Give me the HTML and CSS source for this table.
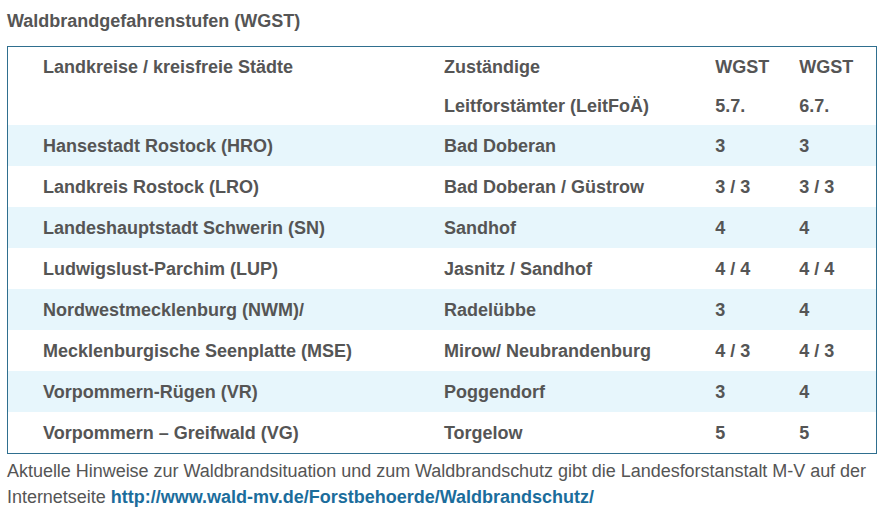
FILE: index.html
```html
<!DOCTYPE html>
<html lang="de">
<head>
<meta charset="utf-8">
<title>Waldbrandgefahrenstufen (WGST)</title>
<link rel="stylesheet" href="styles.css">
</head>
<body>
<div class="page">
  <h2 class="title">Waldbrandgefahrenstufen (WGST)</h2>
  <table class="wgst">
    <colgroup>
      <col class="c1"><col class="c2"><col class="c3"><col class="c4">
    </colgroup>
    <tbody>
      <tr class="head"><td>Landkreise / kreisfreie Städte</td><td>Zuständige</td><td>WGST</td><td>WGST</td></tr>
      <tr class="head"><td></td><td>Leitforstämter (LeitFoÄ)</td><td>5.7.</td><td>6.7.</td></tr>
      <tr class="alt"><td>Hansestadt Rostock (HRO)</td><td>Bad Doberan</td><td>3</td><td>3</td></tr>
      <tr><td>Landkreis Rostock (LRO)</td><td>Bad Doberan / Güstrow</td><td>3 / 3</td><td>3 / 3</td></tr>
      <tr class="alt"><td>Landeshauptstadt Schwerin (SN)</td><td>Sandhof</td><td>4</td><td>4</td></tr>
      <tr><td>Ludwigslust-Parchim (LUP)</td><td>Jasnitz / Sandhof</td><td>4 / 4</td><td>4 / 4</td></tr>
      <tr class="alt"><td>Nordwestmecklenburg (NWM)/</td><td>Radelübbe</td><td>3</td><td>4</td></tr>
      <tr><td>Mecklenburgische Seenplatte (MSE)</td><td>Mirow/ Neubrandenburg</td><td>4 / 3</td><td>4 / 3</td></tr>
      <tr class="alt"><td>Vorpommern-Rügen (VR)</td><td>Poggendorf</td><td>3</td><td>4</td></tr>
      <tr><td>Vorpommern – Greifwald (VG)</td><td>Torgelow</td><td>5</td><td>5</td></tr>
    </tbody>
  </table>
  <p class="note">Aktuelle Hinweise zur Waldbrandsituation und zum Waldbrandschutz gibt die Landesforstanstalt M-V auf der<br>Internetseite <a href="#" class="link">http://www.wald-mv.de/Forstbehoerde/Waldbrandschutz/</a></p>
</div>
</body>
</html>
```

FILE: styles.css
```css
html, body {
  margin: 0;
  padding: 0;
  background: #ffffff;
}
.page {
  padding: 11px 0 0 7px;
  width: 870px;
  font-family: "Liberation Sans", Arial, sans-serif;
  color: #555555;
}
.title {
  margin: 0 0 15px 0;
  font-size: 18px;
  line-height: 20px;
  font-weight: bold;
  color: #555555;
}
.wgst {
  width: 870px;
  border: 1px solid #2f6f8f;
  border-collapse: collapse;
  table-layout: fixed;
  font-size: 18px;
  font-weight: bold;
  color: #555555;
}
.c1 { width: 401px; }
.c2 { width: 271px; }
.c3 { width: 84px; }
.c4 { width: 112px; }
.wgst td {
  padding: 0 0 0 35px;
  height: 41px;
  line-height: 20px;
  vertical-align: middle;
  white-space: nowrap;
}
.wgst tr.head td {
  height: 39px;
}
.wgst tr.alt td {
  background: #e7f6fc;
}
.note {
  margin: 4px 0 0 0;
  font-size: 18px;
  line-height: 26px;
  letter-spacing: -0.03px;
  color: #555555;
}
.link {
  color: #1b6d9c;
  font-weight: bold;
  letter-spacing: 0;
  text-decoration: none;
}
```
